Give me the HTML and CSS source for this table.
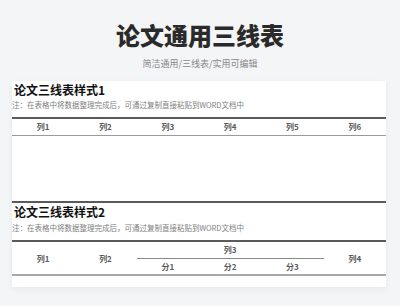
FILE: index.html
```html
<!DOCTYPE html>
<html lang="zh-CN">
<head>
<meta charset="utf-8">
<title>论文通用三线表</title>
<link rel="stylesheet" href="styles.css">
</head>
<body>
<header class="hero">
  <h1 class="hero-title">论文通用三线表</h1>
  <p class="hero-sub">简洁通用/三线表/实用可编辑</p>
</header>
<main class="card">
  <section class="block">
    <h2 class="block-title">论文三线表样式1</h2>
    <p class="note">注：在表格中将数据整理完成后，可通过复制直接粘贴到WORD文档中</p>
    <table class="tl tl-one">
      <thead>
        <tr><th>列1</th><th>列2</th><th>列3</th><th>列4</th><th>列5</th><th>列6</th></tr>
      </thead>
      <tbody>
        <tr class="empty"><td colspan="6"></td></tr>
      </tbody>
    </table>
  </section>
  <section class="block">
    <h2 class="block-title">论文三线表样式2</h2>
    <p class="note note-2">注：在表格中将数据整理完成后，可通过复制直接粘贴到WORD文档中</p>
    <table class="tl tl-two">
      <thead>
        <tr>
          <th rowspan="2">列1</th>
          <th rowspan="2">列2</th>
          <th colspan="3" class="grp">列3</th>
          <th rowspan="2">列4</th>
        </tr>
        <tr><th>分1</th><th>分2</th><th>分3</th></tr>
      </thead>
    </table>
  </section>
</main>
</body>
</html>
```
FILE: styles.css
```css
* { box-sizing: border-box; }
html, body { margin: 0; padding: 0; }
body {
  background: #f4f5f7;
  font-family: "Noto Sans CJK SC", "Noto Sans", sans-serif;
  color: #222;
  width: 400px;
  height: 306px;
  overflow: hidden;
}
.hero {
  padding-top: 20px;
  text-align: center;
}
.hero-title {
  margin: 0;
  font-size: 24px;
  line-height: 29px;
  font-weight: 900;
  color: #2a2a2a;
}
.hero-sub {
  margin: 9px 0 0;
  font-size: 9px;
  line-height: 12px;
  color: #888;
}
.card {
  margin: 11px 14px 0 12px;
  background: #fff;
  box-shadow: 0 2px 6px rgba(0,0,0,0.06);
  padding-bottom: 11px;
}
.block-title {
  margin: 0;
  padding-left: 2px;
  font-size: 12px;
  line-height: 17px;
  font-weight: 700;
  color: #111;
}
.note {
  margin: 2px 0 0;
  font-size: 7.5px;
  line-height: 10px;
  color: #808080;
  white-space: nowrap;
}
.note-2 { margin-top: 3px; }
.tl {
  width: 100%;
  table-layout: fixed;
  border-collapse: collapse;
  margin-top: 7px;
}
.tl th {
  padding: 0;
  font-size: 8px;
  font-weight: 700;
  color: #5a5a5a;
  text-align: center;
}
.tl-one { border-top: 2px solid #5a5a5a; border-bottom: 2px solid #5a5a5a; }
.tl-one thead th { height: 17px; border-bottom: 1px solid #9a9a9a; }
.tl-one .empty td { height: 67px; padding: 0; }
.tl-two { border-top: 2px solid #5a5a5a; border-bottom: 2px solid #a8a8a8; }
.tl-two th { height: 17px; }
.tl-two .grp { border-bottom: 1px solid #8a8a8a; }
```
